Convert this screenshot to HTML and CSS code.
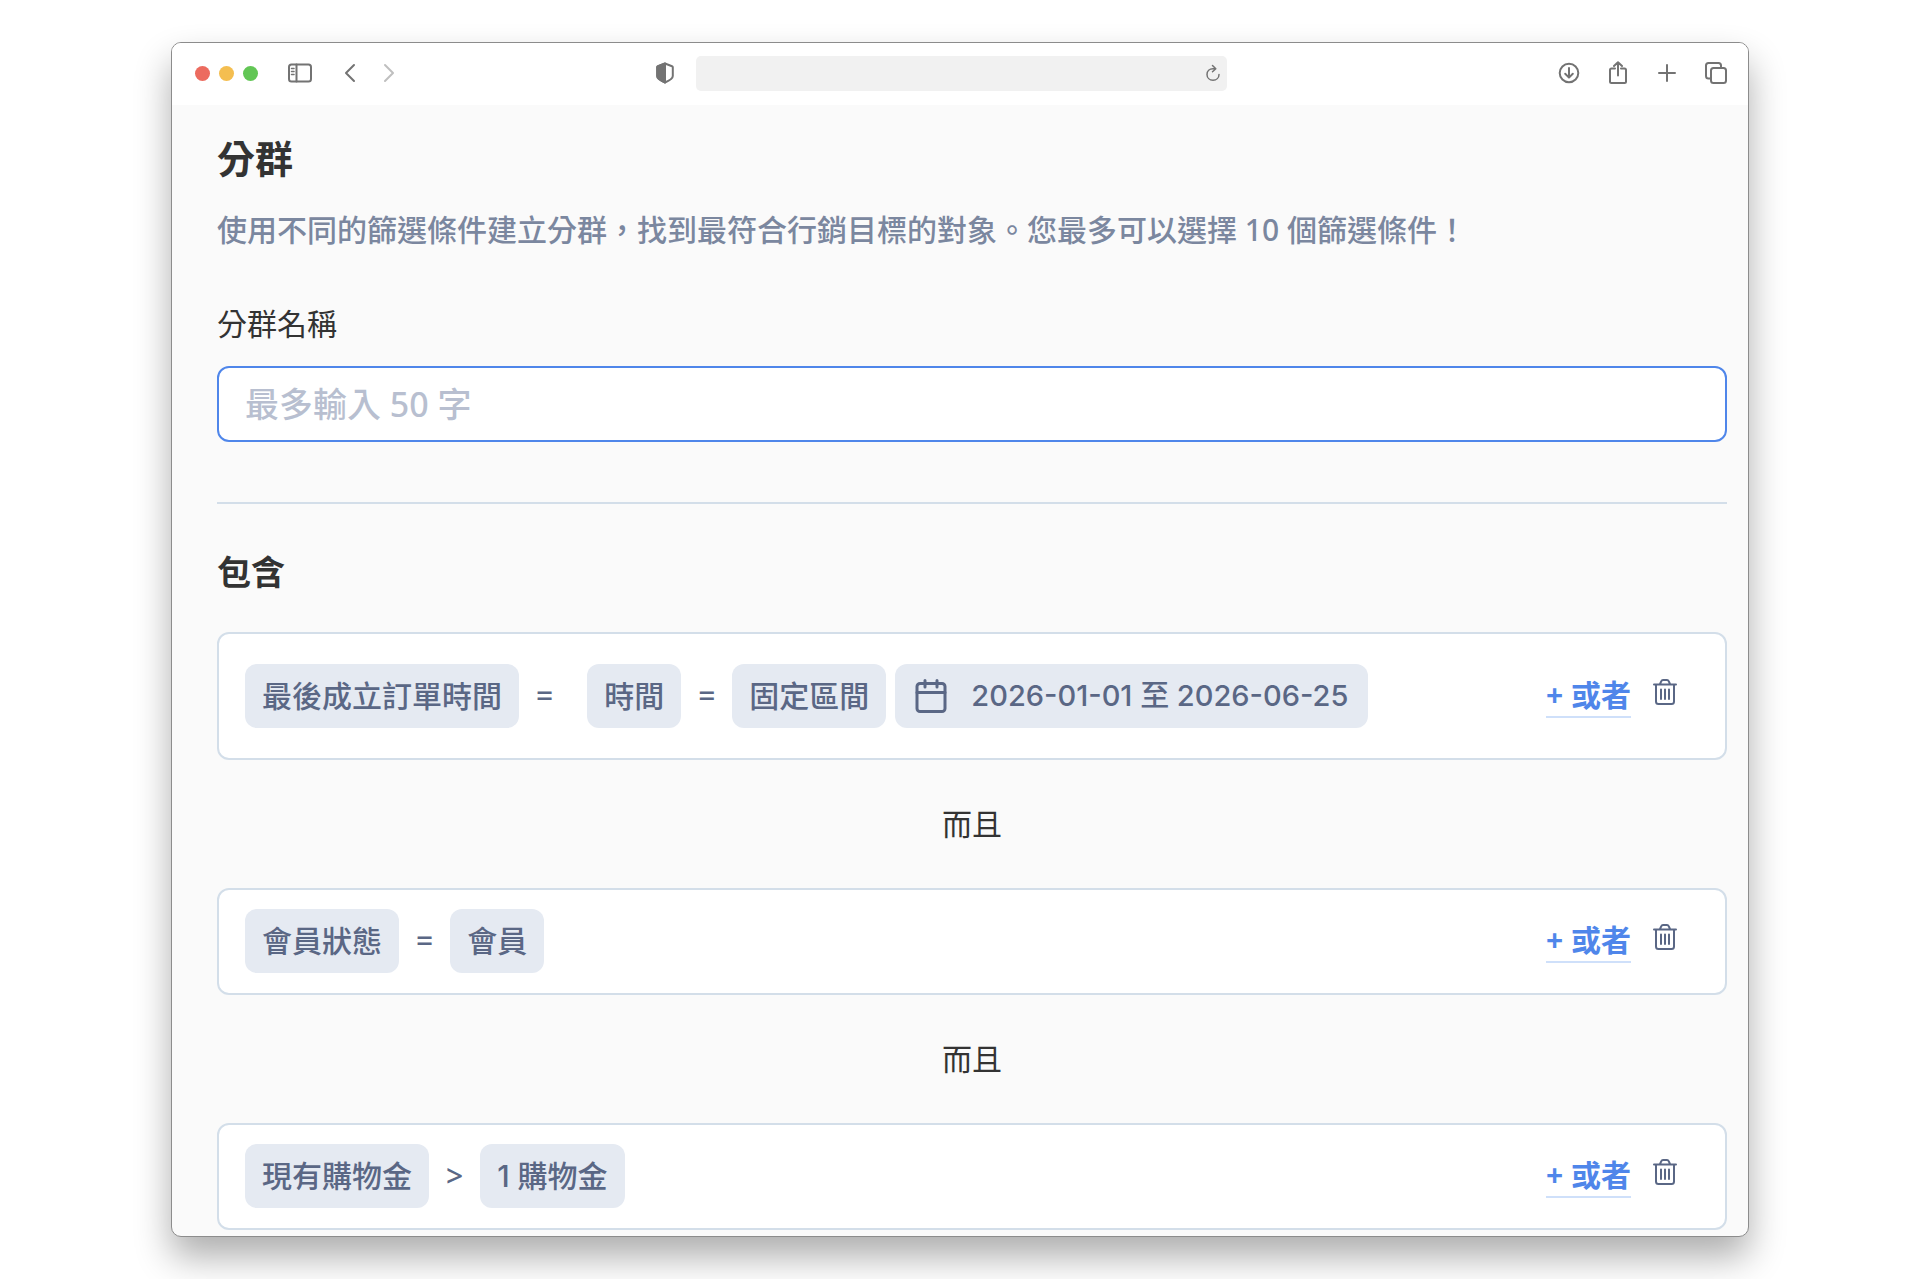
FILE: index.html
```
<!DOCTYPE html>
<html lang="zh-Hant">
<head>
    <meta charset="utf-8">
    <title>分群</title>
    <meta name="viewport" content="width=device-width, initial-scale=1.0">
    <link rel="stylesheet" href="styles.css">
</head>
<body>
    <div class="window">
        <header class="toolbar">
            <div class="toolbar-left">
                <div class="lights">
                    <span class="light light-red"></span>
                    <span class="light light-yellow"></span>
                    <span class="light light-green"></span>
                </div>
                <button class="tool sidebar-btn" type="button" aria-label="側邊欄">
                    <svg width="24" height="20" viewBox="0 0 24 20"><rect x="1" y="1.5" width="22" height="17" rx="2.5"/><path d="M8.500 1.500V18.500"/><path class="thin" d="M3.500 5.500H6M3.500 8.500H6M3.500 11.500H6"/></svg>
                </button>
                <div class="history">
                    <button class="tool" type="button" aria-label="上一頁">
                        <svg width="12" height="20" viewBox="0 0 12 20"><path d="M10 2L2 10L10 18"/></svg>
                    </button>
                    <button class="tool tool-off" type="button" aria-label="下一頁">
                        <svg width="12" height="20" viewBox="0 0 12 20"><path d="M2 2L10 10L2 18"/></svg>
                    </button>
                </div>
                <button class="tool shield" type="button" aria-label="隱私">
                    <svg width="18" height="22" viewBox="0 0 18 22"><path d="M9 1.500L16 4.200Q16.800 4.500 16.800 5.200V14C16.800 16.500 13 18.800 9 20.500C5 18.800 1.200 16.500 1.200 14V5.200Q1.200 4.500 2 4.200Z"/><path class="solid" d="M9 1.500L2 4.200Q1.200 4.500 1.200 5.200V14C1.200 16.500 5 18.800 9 20.500Z"/></svg>
                </button>
            </div>
            <div class="address">
                <input class="address-input" type="text" aria-label="網址">
                <button class="tool" type="button" aria-label="重新整理">
                    <svg width="16" height="18" viewBox="0 0 16 18"><path class="thin" d="M10.500 4.800H8C4.500 4.800 2 7 2 10.500C2 13.700 4.500 16.200 8 16.200C11.500 16.200 14 13.700 14 10.500M7.500 1.500L10.800 4.700L7.500 7.800"/></svg>
                </button>
            </div>
            <div class="toolbar-right">
                <button class="tool" type="button" aria-label="下載">
                    <svg width="22" height="24" viewBox="0 0 22 24"><circle cx="11" cy="12" r="9.300"/><path d="M11 7V16.500M7.200 12.800L11 16.600L14.800 12.800"/></svg>
                </button>
                <button class="tool" type="button" aria-label="分享">
                    <svg width="22" height="24" viewBox="0 0 22 24"><path d="M8 7.500H4.500Q3 7.500 3 9V20.500Q3 22 4.500 22H17.500Q19 22 19 20.500V9Q19 7.500 17.500 7.500H14M11 14.500V1.500M7 5L11 1.200L15 5"/></svg>
                </button>
                <button class="tool" type="button" aria-label="新增分頁">
                    <svg width="22" height="24" viewBox="0 0 22 24"><path d="M11 4V20M3 12H19"/></svg>
                </button>
                <button class="tool" type="button" aria-label="分頁總覽">
                    <svg width="22" height="24" viewBox="0 0 22 24"><rect x="6" y="7" width="15" height="15" rx="2.5"/><path d="M6 17.500H3.500Q1 17.500 1 15V4.500Q1 2 3.500 2H13.500Q16 2 16 4.500V7"/></svg>
                </button>
            </div>
        </header>

        <main class="content">
            <h1 class="title">分群</h1>
            <p class="desc">使用不同的篩選條件建立分群，找到最符合行銷目標的對象。您最多可以選擇 10 個篩選條件！</p>

            <label class="label" for="segment-name">分群名稱</label>
            <input class="name-input" id="segment-name" type="text" maxlength="50" placeholder="最多輸入 50 字">

            <hr class="divider">

            <h2 class="subtitle">包含</h2>

            <section class="card card-tall">
                <span class="tag">最後成立訂單時間</span>
                <span class="op op-wide">=</span>
                <span class="tag">時間</span>
                <span class="op">=</span>
                <span class="tag">固定區間</span>
                <span class="tag tag-date">
                    <svg width="32" height="34" viewBox="0 0 32 34"><rect x="2" y="4.500" width="28" height="28" rx="3"/><path d="M2 13.500H30M10 1.500V8M22 1.500V8"/></svg>
                    2026-01-01 至 2026-06-25
                </span>
                <div class="actions">
                    <a class="or-link" href="#">+ 或者</a>
                    <button class="trash" type="button" aria-label="刪除">
                        <svg width="24" height="26" viewBox="0 0 24 26"><path d="M1 5.500H23M3 5.500V22.500Q3 25 5.500 25H18.500Q21 25 21 22.500V5.500M7 5L8.300 2.200Q8.800 1 10 1H14Q15.200 1 15.700 2.200L17 5"/><path d="M8 10.500V20M12 10.500V20M16 10.500V20"/></svg>
                    </button>
                </div>
            </section>

            <p class="joint">而且</p>

            <section class="card">
                <span class="tag">會員狀態</span>
                <span class="op">=</span>
                <span class="tag">會員</span>
                <div class="actions">
                    <a class="or-link" href="#">+ 或者</a>
                    <button class="trash" type="button" aria-label="刪除">
                        <svg width="24" height="26" viewBox="0 0 24 26"><path d="M1 5.500H23M3 5.500V22.500Q3 25 5.500 25H18.500Q21 25 21 22.500V5.500M7 5L8.300 2.200Q8.800 1 10 1H14Q15.200 1 15.700 2.200L17 5"/><path d="M8 10.500V20M12 10.500V20M16 10.500V20"/></svg>
                    </button>
                </div>
            </section>

            <p class="joint">而且</p>

            <section class="card">
                <span class="tag">現有購物金</span>
                <span class="op">&gt;</span>
                <span class="tag tag-number">1 購物金</span>
                <div class="actions">
                    <a class="or-link" href="#">+ 或者</a>
                    <button class="trash" type="button" aria-label="刪除">
                        <svg width="24" height="26" viewBox="0 0 24 26"><path d="M1 5.500H23M3 5.500V22.500Q3 25 5.500 25H18.500Q21 25 21 22.500V5.500M7 5L8.300 2.200Q8.800 1 10 1H14Q15.200 1 15.700 2.200L17 5"/><path d="M8 10.500V20M12 10.500V20M16 10.500V20"/></svg>
                    </button>
                </div>
            </section>
        </main>
    </div>
</body>
</html>
```
FILE: styles.css
```
* {
    box-sizing: border-box;
}

body {
    margin: 0;
    padding: 42px 171px;
    background: #fff;
    font-family: "Noto Sans", "Noto Sans CJK TC", sans-serif;
    font-size: 30px;
    line-height: 44px;
    color: #333;
}

button {
    padding: 0;
    border: 0;
    background: none;
    cursor: pointer;
}

svg {
    display: block;
    fill: none;
    stroke: currentColor;
    stroke-width: 2;
    stroke-linecap: round;
    stroke-linejoin: round;
}

svg .thin {
    stroke-width: 1.5;
}

svg .solid {
    fill: currentColor;
}

/* browser window */
.window {
    border: 1px solid #8c8c8c;
    border-radius: 10px;
    background: #fafafa;
    box-shadow: 0 20px 36px rgba(0, 0, 0, 0.32);
    overflow: hidden;
}

.toolbar {
    display: grid;
    grid-template-columns: 1fr 531px 1fr;
    align-items: center;
    height: 62px;
    padding: 0 21px 2px 23px;
    background: #fff;
}

.toolbar-left,
.toolbar-right,
.lights,
.history {
    display: flex;
    align-items: center;
}

.lights {
    gap: 9px;
}

.light {
    width: 15px;
    height: 15px;
    border-radius: 50%;
}

.light-red {
    background: #ec6b5f;
}

.light-yellow {
    background: #f4be50;
}

.light-green {
    background: #62c655;
}

.tool {
    color: #737373;
}

.tool-off {
    color: #bfbfbf;
}

.sidebar-btn {
    margin-left: 30px;
}

.history {
    gap: 27px;
    margin-left: 32px;
}

.shield {
    margin: 0 22px 0 auto;
}

.address {
    display: flex;
    align-items: center;
    height: 35px;
    padding-right: 6px;
    border-radius: 5px;
    background: #f1f1f1;
}

.address-input {
    flex: 1;
    min-width: 0;
    border: 0;
    outline: 0;
    background: none;
    font: 16px/20px "Noto Sans", sans-serif;
}

.toolbar-right {
    justify-content: flex-end;
    gap: 27px;
}

/* page */
.content {
    padding: 25px 21px 6px 45px;
}

.title {
    margin: 0 0 22px;
    font-size: 38px;
    line-height: 56px;
}

.desc {
    margin: 0 0 50px;
    font-weight: 500;
    color: #7b879f;
}

.label {
    display: block;
    margin-bottom: 20px;
}

.name-input {
    display: block;
    width: 100%;
    height: 76px;
    padding: 0 26px;
    border: 2px solid #4f86ea;
    border-radius: 12px;
    outline: 0;
    background: #fff;
    font: inherit;
    font-size: 34px;
    color: #333;
}

.name-input::placeholder {
    font-weight: 500;
    color: #b8bfd0;
}

.divider {
    height: 2px;
    margin: 60px 0 44px;
    border: 0;
    background: #d3dee9;
}

.subtitle {
    margin: 0 0 36px;
    font-size: 34px;
    line-height: 48px;
}

.card {
    display: flex;
    align-items: center;
    padding: 19px 48px 20px 26px;
    border: 2px solid #d3dee9;
    border-radius: 12px;
    background: #fff;
    font-weight: 500;
    color: #5a6785;
}

.card-tall {
    padding-top: 30px;
    padding-bottom: 30px;
}

.tag {
    padding: 10px 17px;
    border-radius: 12px;
    background: #e5eaf2;
    white-space: nowrap;
}

.tag-date,
.tag-number {
    font-family: Inter, "Noto Sans CJK TC", sans-serif;
}

.tag-date {
    display: flex;
    align-items: center;
    gap: 24px;
    margin-left: 9px;
    padding: 10px 20px;
    font-size: 29px;
}

.tag-date svg {
    stroke-width: 3;
}

.op {
    margin: 0 17px;
}

.op-wide {
    margin-right: 34px;
}

.actions {
    display: flex;
    align-items: center;
    gap: 22px;
    margin-left: auto;
}

.or-link {
    border-bottom: 2px solid #cfe0fa;
    font-weight: bold;
    line-height: 42px;
    color: #4f86ea;
    text-decoration: none;
}

.trash {
    margin-bottom: 8px;
    color: #5a6785;
}

.joint {
    margin: 0;
    line-height: 128px;
    text-align: center;
}
```
